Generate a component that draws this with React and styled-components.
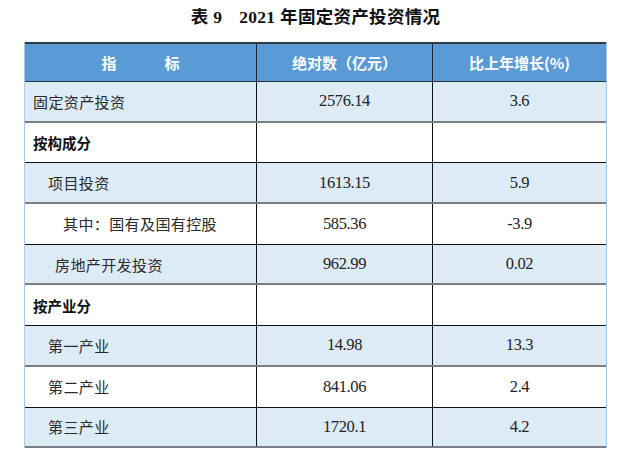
import React from 'react';
import styled, { createGlobalStyle } from 'styled-components';

const GlobalStyle = createGlobalStyle`
  html, body {
    margin: 0;
    padding: 0;
    background: #ffffff;
  }
  body {
    font-family: "Liberation Serif", "Noto Sans CJK SC", serif;
    color: #1e1e1e;
  }
`;

const rows = [
  { name: '固定资产投资', value: '2576.14', growth: '3.6', shade: true, indent: 0 },
  { name: '按构成分', value: '', growth: '', shade: false, indent: 0, bold: true },
  { name: '项目投资', value: '1613.15', growth: '5.9', shade: true, indent: 15 },
  { name: '其中：国有及国有控股', value: '585.36', growth: '-3.9', shade: false, indent: 30 },
  { name: '房地产开发投资', value: '962.99', growth: '0.02', shade: true, indent: 22 },
  { name: '按产业分', value: '', growth: '', shade: false, indent: 0, bold: true },
  { name: '第一产业', value: '14.98', growth: '13.3', shade: true, indent: 15 },
  { name: '第二产业', value: '841.06', growth: '2.4', shade: false, indent: 15 },
  { name: '第三产业', value: '1720.1', growth: '4.2', shade: true, indent: 15 }
];

const Page = styled.div`
  width: 631px;
  padding-top: 6px;
`;

const Title = styled.h1`
  margin: 0;
  height: 36px;
  line-height: 22px;
  text-align: center;
  font-family: "Liberation Serif", "Noto Sans CJK SC", serif;
  font-weight: 700;
  font-size: 17.5px;
  color: #111;
  letter-spacing: 0.3px;
`;

const TitleGap = styled.span`
  display: inline-block;
  width: 17px;
`;

const Table = styled.div`
  width: 583px;
  margin: 0 auto;
  border-left: 1px solid #a9c8e8;
  border-right: 1px solid #a9c8e8;
  box-sizing: border-box;
`;

const HeadRow = styled.div`
  display: grid;
  grid-template-columns: 231px 176px 1fr;
  height: 40px;
  background: #5b9bd5;
  border-top: 2px solid #2e3a46;
  border-bottom: 1px solid #253240;
  box-sizing: border-box;
`;

const HeadCell = styled.div`
  display: flex;
  align-items: center;
  justify-content: center;
  font-family: "Noto Sans CJK SC", sans-serif;
  font-weight: 700;
  font-size: 15px;
  color: #ffffff;
  border-left: ${p => (p.$first ? 'none' : '1px solid #1c2733')};
`;

const Spread = styled.span`
  display: inline-block;
  width: 48px;
`;

const Row = styled.div`
  display: grid;
  grid-template-columns: 231px 176px 1fr;
  height: 40.7px;
  background: ${p => (p.$shade ? '#ddebf7' : '#ffffff')};
  border-bottom: ${p => (p.$shade ? '2px solid #7b7f84' : '1px solid #111')};
  box-sizing: border-box;
`;

const NameCell = styled.div`
  display: flex;
  align-items: center;
  padding-left: ${p => 8 + p.$indent}px;
  font-family: "Noto Sans CJK SC", sans-serif;
  font-weight: ${p => (p.$bold ? 700 : 400)};
  font-size: ${p => (p.$bold ? '14.5px' : '15px')};
  color: ${p => (p.$bold ? '#111' : '#2a2a2a')};
  letter-spacing: ${p => (p.$bold ? '0' : '0.4px')};
`;

const NumCell = styled.div`
  display: flex;
  align-items: center;
  justify-content: center;
  border-left: 1px solid #111;
  font-family: "Liberation Serif", serif;
  font-size: 16.5px;
  color: #222;
  letter-spacing: -0.4px;
`;

export default function App() {
  return (
    <Page>
      <GlobalStyle />
      <Title>
        表 9<TitleGap />2021 年固定资产投资情况
      </Title>
      <Table>
        <HeadRow>
          <HeadCell $first>
            指<Spread />标
          </HeadCell>
          <HeadCell>绝对数（亿元）</HeadCell>
          <HeadCell>比上年增长(%)</HeadCell>
        </HeadRow>
        {rows.map(r => (
          <Row key={r.name} $shade={r.shade}>
            <NameCell $indent={r.indent} $bold={r.bold}>{r.name}</NameCell>
            <NumCell>{r.value}</NumCell>
            <NumCell>{r.growth}</NumCell>
          </Row>
        ))}
      </Table>
    </Page>
  );
}
